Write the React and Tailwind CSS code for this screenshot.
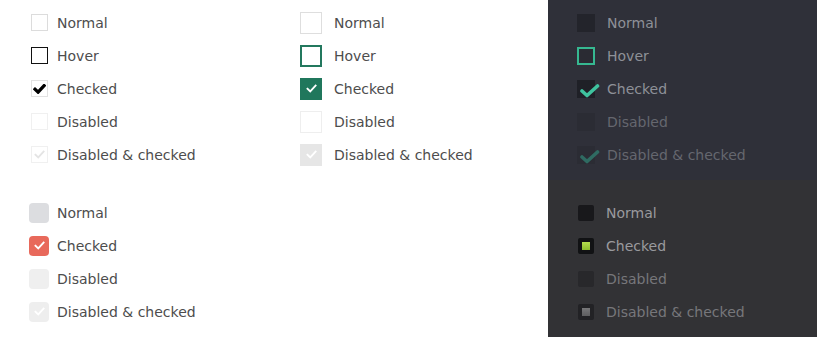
const font = { fontFamily: '"DejaVu Sans", sans-serif' };

function Check({ className, width = 12, height = 10, stroke = 2.4 }) {
  return (
    <svg width={width} height={height} viewBox="0 0 12 10" className={className} fill="none">
      <path d="M1.5 5.2 L4.6 8.2 L10.6 1.6" stroke="currentColor" strokeWidth={stroke} strokeLinecap="square" strokeLinejoin="miter" />
    </svg>
  );
}

function Row({ box, label, textClass, gap = 'gap-[9px]' }) {
  return (
    <div className={`flex h-[33px] items-center ${gap}`}>
      {box}
      <span className={`text-[14px] leading-none ${textClass}`}>{label}</span>
    </div>
  );
}

function PlainColumn() {
  const box = 'flex h-[17px] w-[17px] items-center justify-center bg-white';
  return (
    <div className="flex flex-col pl-[31px]">
      <Row label="Normal" textClass="text-[#4d4d4d]" box={<div className={`${box} border border-[#dcdcdc]`} />} />
      <Row label="Hover" textClass="text-[#4d4d4d]" box={<div className={`${box} border border-[#111]`} />} />
      <Row
        label="Checked"
        textClass="text-[#4d4d4d]"
        box={
          <div className={`${box} border border-[#e2e2e2]`}>
            <Check className="text-black" width={13} height={10} stroke={3.2} />
          </div>
        }
      />
      <Row label="Disabled" textClass="text-[#4d4d4d]" box={<div className={`${box} border border-[#f0f0f0]`} />} />
      <Row
        label="Disabled & checked"
        textClass="text-[#4d4d4d]"
        box={
          <div className={`${box} border border-[#f0f0f0]`}>
            <Check className="text-[#e4e4e4]" width={11} height={9} stroke={2} />
          </div>
        }
      />
    </div>
  );
}

function GreenColumn() {
  const box = 'flex h-[22px] w-[22px] items-center justify-center';
  return (
    <div className="flex flex-col">
      <Row gap="gap-[12px]" label="Normal" textClass="text-[#4d4d4d]" box={<div className={`${box} border border-[#dedede] bg-white`} />} />
      <Row gap="gap-[12px]" label="Hover" textClass="text-[#4d4d4d]" box={<div className={`${box} border-2 border-[#23785e] bg-white`} />} />
      <Row
        gap="gap-[12px]"
        label="Checked"
        textClass="text-[#4d4d4d]"
        box={
          <div className={`${box} bg-[#20775c]`}>
            <Check className="text-white" width={11} height={9} stroke={2} />
          </div>
        }
      />
      <Row gap="gap-[12px]" label="Disabled" textClass="text-[#4d4d4d]" box={<div className={`${box} border border-[#eeeeee] bg-white`} />} />
      <Row
        gap="gap-[12px]"
        label="Disabled & checked"
        textClass="text-[#4d4d4d]"
        box={
          <div className={`${box} bg-[#e6e6e6]`}>
            <Check className="text-white" width={11} height={9} stroke={2} />
          </div>
        }
      />
    </div>
  );
}

function RoundColumn() {
  const box = 'flex h-[20px] w-[20px] items-center justify-center rounded-[4px]';
  return (
    <div className="flex flex-col pl-[29px]">
      <Row gap="gap-[8px]" label="Normal" textClass="text-[#4d4d4d]" box={<div className={`${box} bg-[#dcdde0]`} />} />
      <Row
        gap="gap-[8px]"
        label="Checked"
        textClass="text-[#4d4d4d]"
        box={
          <div className={`${box} bg-[#e8695b]`}>
            <Check className="text-white" width={11} height={9} stroke={2} />
          </div>
        }
      />
      <Row gap="gap-[8px]" label="Disabled" textClass="text-[#4d4d4d]" box={<div className={`${box} bg-[#efefef]`} />} />
      <Row
        gap="gap-[8px]"
        label="Disabled & checked"
        textClass="text-[#4d4d4d]"
        box={
          <div className={`${box} bg-[#eeeeee]`}>
            <Check className="text-white" width={11} height={9} stroke={2} />
          </div>
        }
      />
    </div>
  );
}

function DarkTealColumn() {
  const box = 'relative h-[18px] w-[18px]';
  return (
    <div className="flex flex-col pl-[29px]">
      <Row gap="gap-[12px]" label="Normal" textClass="text-[#8e9098]" box={<div className={`${box} bg-[#23242b]`} />} />
      <Row gap="gap-[12px]" label="Hover" textClass="text-[#8e9098]" box={<div className={`${box} border-2 border-[#36b891] bg-[#2a2b33]`} />} />
      <Row
        gap="gap-[12px]"
        label="Checked"
        textClass="text-[#8e9098]"
        box={
          <div className={`${box} bg-[#1f2027]`}>
            <svg width="20" height="14" viewBox="0 0 20 14" fill="none" className="absolute left-[3px] top-[4px]">
              <path d="M2 7 L7 11.5 L17.5 2" stroke="#3fc39f" strokeWidth="3.6" strokeLinecap="round" strokeLinejoin="round" />
            </svg>
          </div>
        }
      />
      <Row gap="gap-[12px]" label="Disabled" textClass="text-[#65676f]" box={<div className={`${box} bg-[#2b2c34]`} />} />
      <Row
        gap="gap-[12px]"
        label="Disabled & checked"
        textClass="text-[#65676f]"
        box={
          <div className={`${box} bg-[#2b2c34]`}>
            <svg width="20" height="14" viewBox="0 0 20 14" fill="none" className="absolute left-[3px] top-[4px]">
              <path d="M2 7 L7 11.5 L17.5 2" stroke="#2f6b62" strokeWidth="3.6" strokeLinecap="round" strokeLinejoin="round" />
            </svg>
          </div>
        }
      />
    </div>
  );
}

function DarkSquareColumn() {
  const box = 'flex h-[16px] w-[16px] items-center justify-center rounded-[2px]';
  return (
    <div className="flex flex-col pl-[30px]">
      <Row gap="gap-[12px]" label="Normal" textClass="text-[#9a9a9e]" box={<div className={`${box} bg-[#18181b]`} />} />
      <Row
        gap="gap-[12px]"
        label="Checked"
        textClass="text-[#9a9a9e]"
        box={
          <div className={`${box} bg-[#111214]`}>
            <div className="h-[8px] w-[8px] bg-gradient-to-b from-[#b4dc4e] to-[#8cbb2c]" />
          </div>
        }
      />
      <Row gap="gap-[12px]" label="Disabled" textClass="text-[#77777b]" box={<div className={`${box} bg-[#28282b]`} />} />
      <Row
        gap="gap-[12px]"
        label="Disabled & checked"
        textClass="text-[#77777b]"
        box={
          <div className={`${box} bg-[#222225]`}>
            <div className="h-[8px] w-[8px] bg-gradient-to-b from-[#777779] to-[#5e5e60]" />
          </div>
        }
      />
    </div>
  );
}

export default function App() {
  return (
    <div className="flex h-[337px] w-[817px] overflow-hidden bg-white" style={font}>
      <div className="flex w-[548px] flex-col">
        <div className="flex h-[180px] pt-[6px]">
          <div className="w-[300px]">
            <PlainColumn />
          </div>
          <GreenColumn />
        </div>
        <div className="flex-1 pt-[16px]">
          <RoundColumn />
        </div>
      </div>
      <div className="flex flex-1 flex-col">
        <div className="h-[180px] bg-[#2f3039] pt-[6px]">
          <DarkTealColumn />
        </div>
        <div className="flex-1 bg-[#323235] pt-[16px]">
          <DarkSquareColumn />
        </div>
      </div>
    </div>
  );
}
